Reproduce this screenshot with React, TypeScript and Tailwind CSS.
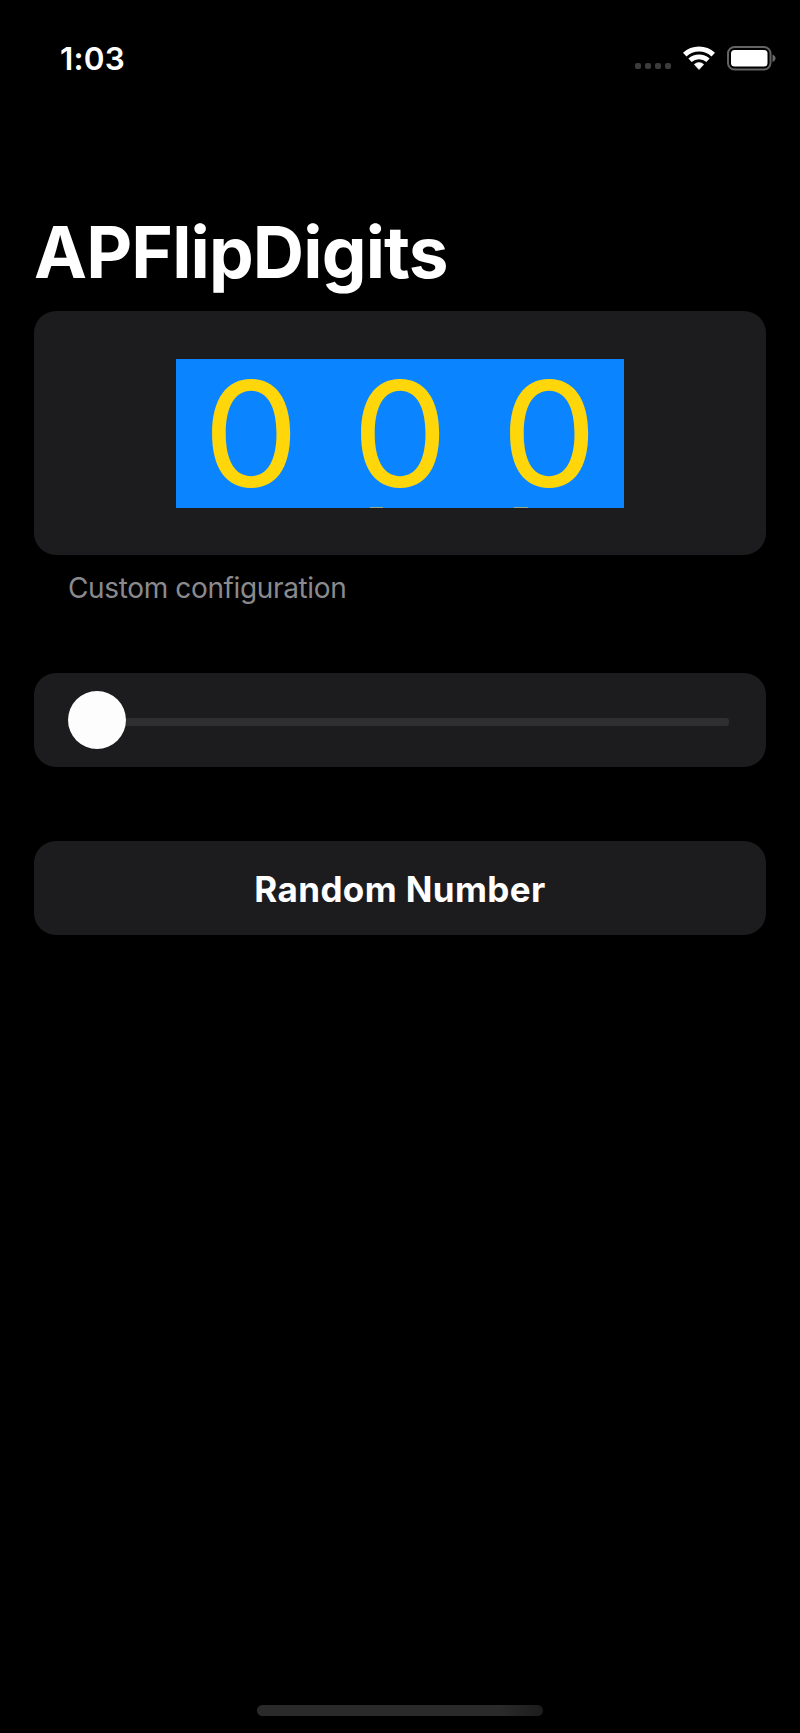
import React from "react";

function StatusBar() {
  return (
    <header className="flex h-[117px] justify-between pl-[60px] pr-[23px] pt-[42px]">
      <span className="h-[34px] whitespace-nowrap text-[31.5px] font-semibold leading-[34px] tracking-[0.2px]">1:03</span>
      <div className="flex h-[34px] items-start">
        <div className="mt-[21px] flex gap-[4px]">
          {[0, 1, 2, 3].map((i) => (
            <span key={i} className="h-[6px] w-[6px] rounded-[2px] bg-[#3c3c3c]" />
          ))}
        </div>
        <svg className="ml-[12px] mt-[4px]" width="32" height="25" viewBox="0 0 32 25">
          <path d="M1.700 8.600A21 21 0 0 1 30.300 8.600" fill="none" stroke="#fff" strokeWidth="5.200" />
          <path d="M7 14.350A13.200 13.200 0 0 1 25 14.350" fill="none" stroke="#fff" strokeWidth="4.800" />
          <path d="M16 23.500L11.300 18.400A7 7 0 0 1 20.700 18.400z" fill="#fff" stroke="#fff" strokeWidth="0.600" strokeLinejoin="round" />
        </svg>
        <svg className="ml-[12px] mt-[4px]" width="50" height="25" viewBox="0 0 50 25">
          <rect x="1" y="1" width="42.500" height="22.500" rx="6.500" fill="none" stroke="#646464" strokeWidth="2" />
          <rect x="4" y="4" width="36.500" height="16.500" rx="3.500" fill="#fff" />
          <path d="M45.500 8.500c1.700.7 3 2.100 3 3.800s-1.300 3.100-3 3.800z" fill="#6c6c6c" />
        </svg>
      </div>
    </header>
  );
}

function FlipDigit({ value, mark }: { value: string; mark?: string }) {
  return (
    <div className="relative flex h-[149px] flex-1 items-center justify-center bg-[#0a84ff]">
      <span className="inline-block h-[149px] scale-x-[1.045] text-[146px] leading-[150px] text-[#ffd60a]">{value}</span>
      {mark && <span className={mark} />}
    </div>
  );
}

export default function App() {
  return (
    <main className="flex h-[1733px] w-[800px] flex-col bg-black font-['Inter',sans-serif] text-white">
      <StatusBar />
      <h1 className="mt-[91px] h-[88px] whitespace-nowrap pl-[34px] text-[71px] font-bold leading-[88px] tracking-[-0.85px]">APFlipDigits</h1>

      <section className="mx-[34px] mt-[15px] flex h-[244px] justify-center rounded-[22px] bg-[#1c1c1e] pt-[48px]">
        <div className="flex h-[149px] w-[448px]">
          <FlipDigit value="0" />
          <FlipDigit value="0" mark="absolute bottom-0 left-[45px] h-px w-[13px] bg-[#9aa890]" />
          <FlipDigit value="0" mark="absolute bottom-0 left-[39px] h-px w-[14px] bg-[#9aa890]" />
        </div>
      </section>
      <p className="mt-[16px] h-[34px] whitespace-nowrap pl-[68px] text-[28px] leading-[34px] tracking-[-0.36px] text-[#8a8a8e]">Custom configuration</p>

      <section className="mx-[34px] mt-[68px] flex h-[94px] items-start rounded-[22px] bg-[#1c1c1e] pl-[34px] pr-[37px]">
        <div className="mt-[18px] h-[58px] w-[58px] rounded-full bg-[#fdfdfd]" />
        <div className="mt-[45px] h-[8px] flex-1 rounded-r-[3px] bg-[#2f2f31]" />
      </section>

      <button className="mx-[34px] mt-[74px] flex h-[94px] items-center justify-center rounded-[22px] bg-[#1c1c1e] pt-[2px] text-[35px] font-bold tracking-[0.4px]">
        <span className="whitespace-nowrap">Random Number</span>
      </button>

      <div className="mb-[17px] mt-auto h-[11px] w-[286px] self-center rounded-full bg-linear-to-r from-[#2a2a2a] from-85% to-[#1c1c1c]" />
    </main>
  );
}
